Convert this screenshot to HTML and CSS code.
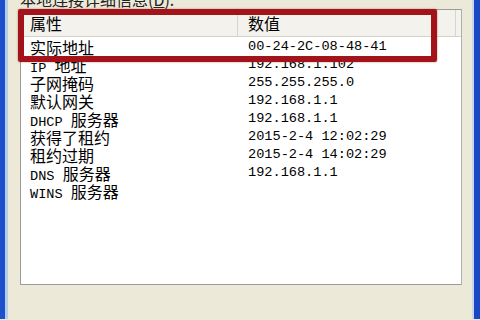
FILE: index.html
```html
<!DOCTYPE html>
<html lang="zh-CN">
<head>
    <meta charset="UTF-8">
    <title>网络连接详细信息</title>
    <link rel="stylesheet" href="styles.css">
</head>
<body>
    <div class="dialog">
        <div class="caption">本地连接详细信息(<u>D</u>):</div>

        <div class="listview">
            <div class="lv-head">
                <div class="col-name">属性</div>
                <div class="col-value">数值</div>
            </div>
            <div class="lv-body">
                <div class="row"><div class="col-name">实际地址</div><div class="col-value en">00-24-2C-08-48-41</div></div>
                <div class="row"><div class="col-name"><span class="en">IP </span>地址</div><div class="col-value en">192.168.1.102</div></div>
                <div class="row"><div class="col-name">子网掩码</div><div class="col-value en">255.255.255.0</div></div>
                <div class="row"><div class="col-name">默认网关</div><div class="col-value en">192.168.1.1</div></div>
                <div class="row"><div class="col-name"><span class="en">DHCP </span>服务器</div><div class="col-value en">192.168.1.1</div></div>
                <div class="row"><div class="col-name">获得了租约</div><div class="col-value en">2015-2-4 12:02:29</div></div>
                <div class="row"><div class="col-name">租约过期</div><div class="col-value en">2015-2-4 14:02:29</div></div>
                <div class="row"><div class="col-name"><span class="en">DNS </span>服务器</div><div class="col-value en">192.168.1.1</div></div>
                <div class="row"><div class="col-name"><span class="en">WINS </span>服务器</div><div class="col-value"></div></div>
            </div>
            <!-- red highlight drawn over the first rows -->
            <div class="highlight"></div>
        </div>
    </div>
</body>
</html>
```

FILE: styles.css
```css
html, body { margin: 0; padding: 0; }
body { width: 480px; height: 320px; overflow: hidden; background: #ECE9D8; font-family: "Noto Sans CJK SC", sans-serif; font-size: 16px; color: #000; }
.en { font-family: "Liberation Mono", monospace; font-size: 13.6px; }

.dialog { box-sizing: border-box; height: 320px; border-left: 5px solid #1E50CC; border-right: 6px solid #1A48C4; box-shadow: inset 3px 0 0 #B4CDEE, inset -2px 0 0 #C9D6EC; padding: 0 0 0 15px; }
.caption { height: 10px; line-height: 10px; margin-top: -1px; font-size: 16px; color: #222; position: relative; top: -5px; }

.listview { position: relative; box-sizing: border-box; width: 442px; height: 276px; background: #fff; border: 1px solid #9C9C9C; border-right-color: #B0B0B0; }
.lv-head { display: flex; height: 26px; line-height: 26px; background: #F3F2EC; border-bottom: 1px solid #D6D3C6; }
.lv-head .col-name { border-right: 1px solid #D8D5CA; }
.lv-head .col-value { width: 218px; border-right: 1px solid #D8D5CA; }
.col-name { box-sizing: border-box; width: 217px; padding-left: 9px; white-space: nowrap; }
.col-value { box-sizing: border-box; padding-left: 10px; white-space: nowrap; }

.lv-body { padding-top: 1px; }
.row { display: flex; height: 18px; line-height: 18px; }

.highlight { position: absolute; left: -3px; top: -1px; width: 419px; height: 53px; box-sizing: border-box; border: 6px solid #A3141A; border-radius: 2px; box-shadow: 0 0 2px rgba(120, 0, 0, 0.5); }
```
